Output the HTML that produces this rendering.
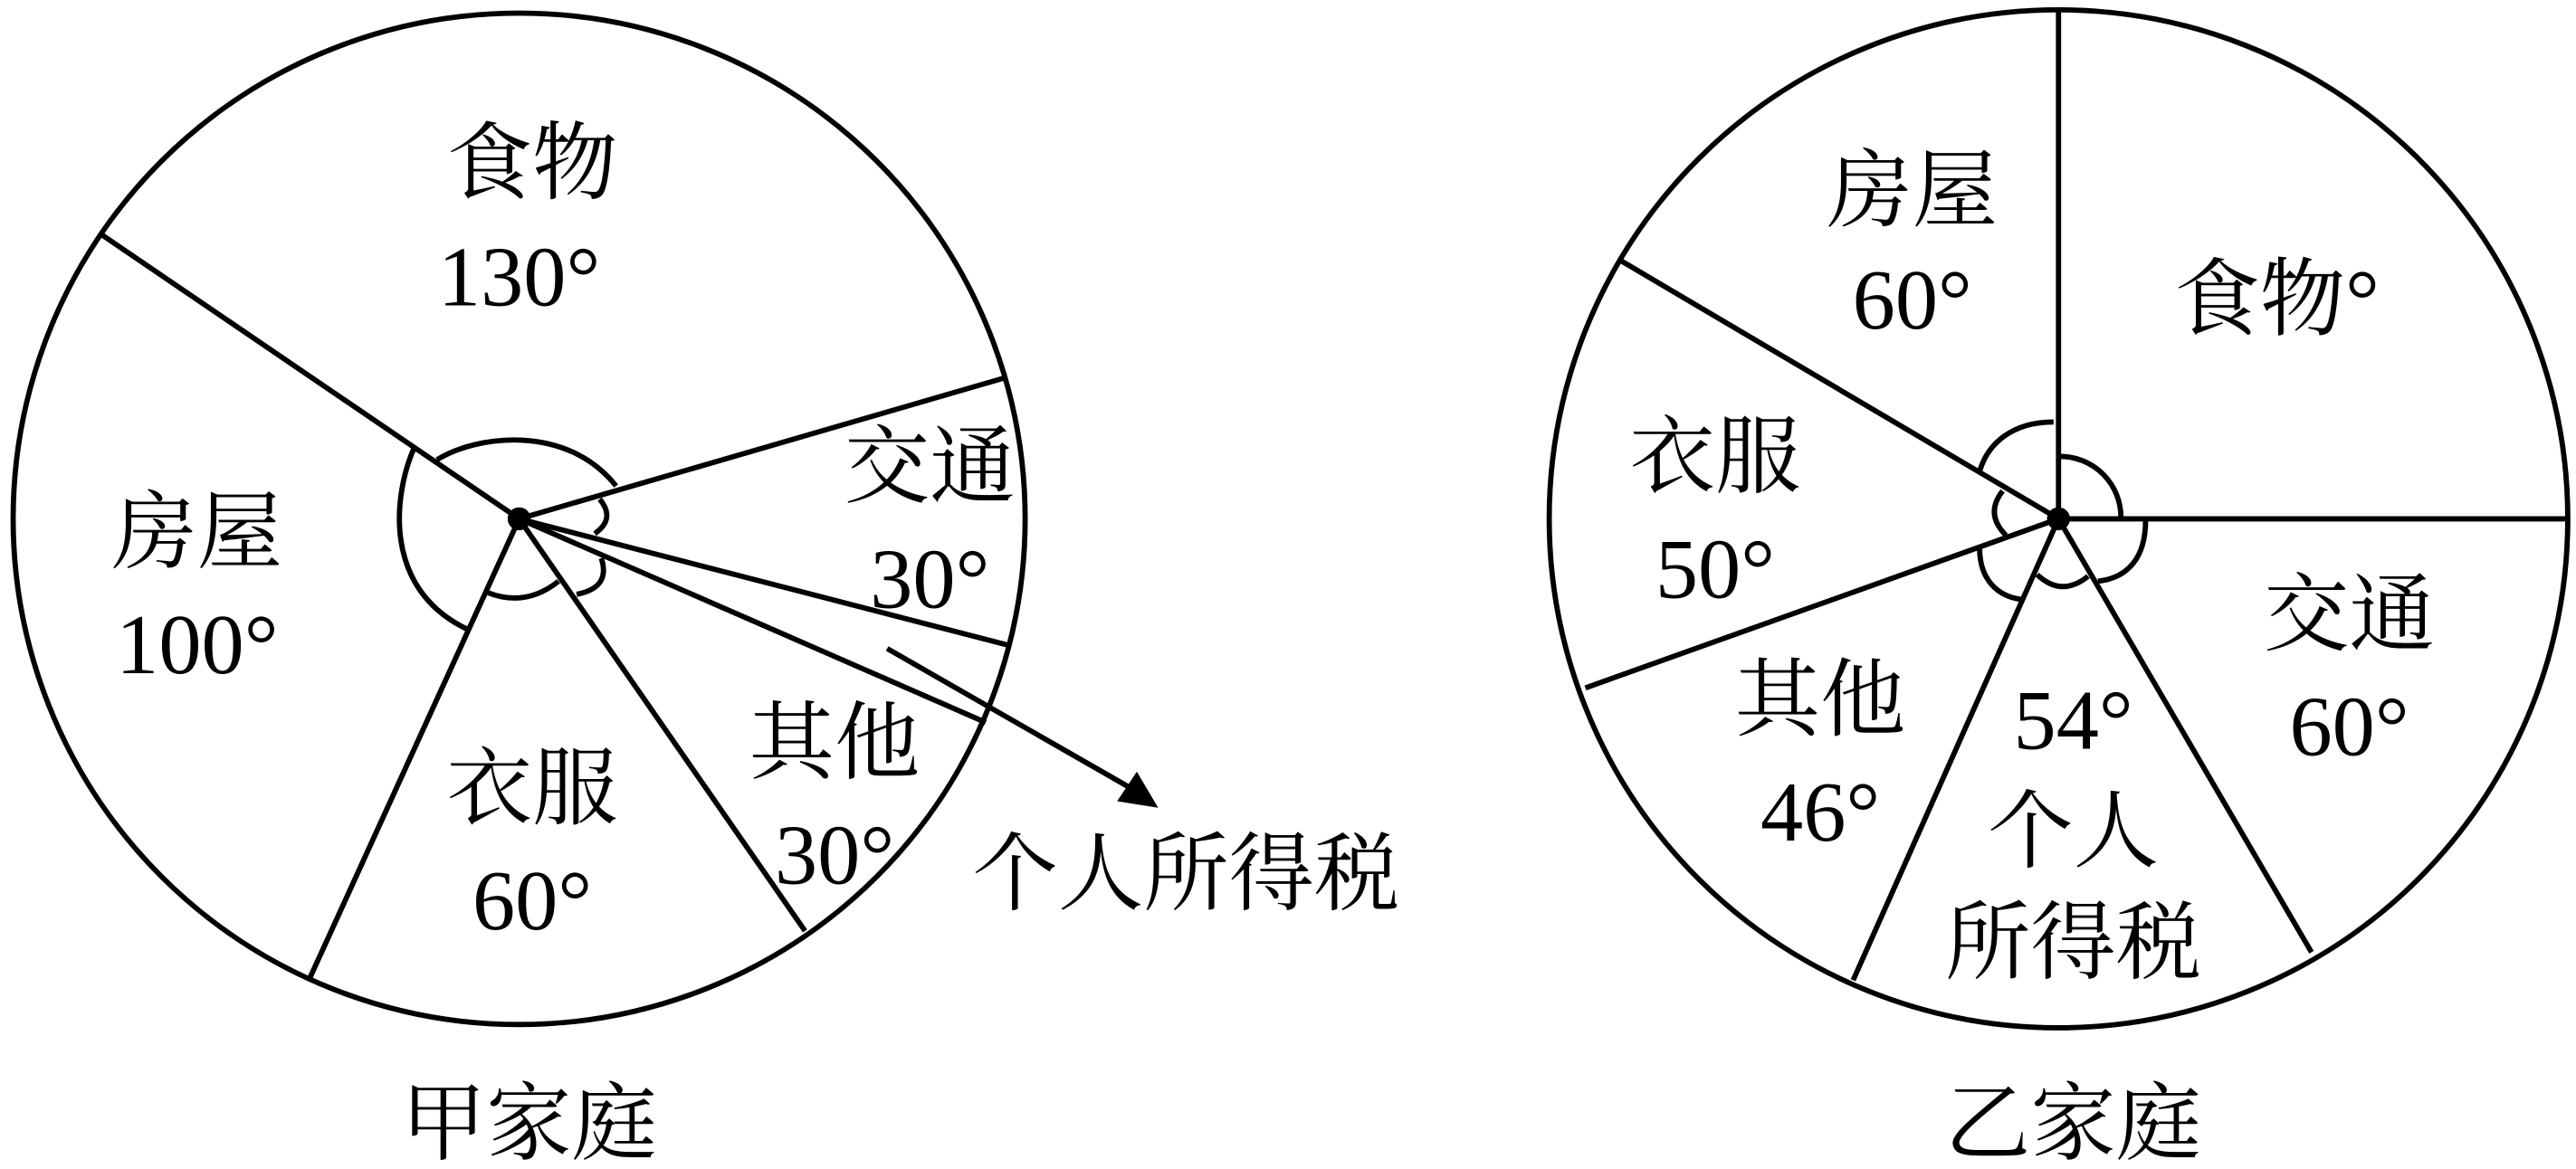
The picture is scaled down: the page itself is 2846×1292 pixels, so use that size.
<!DOCTYPE html>
<html><head><meta charset="utf-8"><style>
html,body{margin:0;padding:0;background:#fff;}
svg{display:block;}
text{font-family:"Liberation Serif","Noto Serif CJK SC",serif;font-size:52px;fill:#000;}
</style></head><body>
<svg width="2846" height="1292" viewBox="0 0 1568 712" preserveAspectRatio="none" xmlns="http://www.w3.org/2000/svg">
<g fill="none" stroke="#000" stroke-width="3.2">
<circle cx="316" cy="316" r="308"/>
<line x1="316" y1="316" x2="62" y2="143"/>
<line x1="316" y1="316" x2="612" y2="230"/>
<line x1="316" y1="316" x2="614" y2="393"/>
<line x1="316" y1="316" x2="600" y2="440"/>
<line x1="316" y1="316" x2="490" y2="567"/>
<line x1="316" y1="316" x2="188" y2="597"/>
<line x1="540" y1="395" x2="690" y2="481"/>
<path d="M266,280 C290,265 345,258 375,296"/>
<path d="M252,273 C240,300 232,358 284,383"/>
<path d="M365,304 Q375,316 362,325"/>
<path d="M297,361 Q320,370 340,354"/>
<path d="M366,340 Q372,358 351,362"/>
<circle cx="1253" cy="316" r="310"/>
<line x1="1253" y1="316" x2="1253" y2="6"/>
<line x1="1253" y1="316" x2="1562" y2="316"/>
<line x1="1253" y1="316" x2="1407" y2="580"/>
<line x1="1253" y1="316" x2="1128" y2="597"/>
<line x1="1253" y1="316" x2="965" y2="419"/>
<line x1="1253" y1="316" x2="987" y2="159"/>
<path d="M1250,257 C1225,257 1210,270 1205,287"/>
<path d="M1254,278 A37,37 0 0 1 1291,315"/>
<path d="M1306,317 C1306,340 1295,352 1277,354"/>
<path d="M1240,350 Q1255,364 1271,351"/>
<path d="M1205,334 C1205,352 1215,363 1230,365"/>
<path d="M1219,299 Q1208,313 1221,326"/>
</g>
<circle cx="316" cy="316" r="7" fill="#000"/>
<circle cx="1253" cy="316" r="7" fill="#000"/>
<polygon points="705,492 680,488 692,470" fill="#000"/>
<g text-anchor="middle">
<text x="324" y="117">食物</text>
<text x="316" y="186">130°</text>
<text x="120" y="342">房屋</text>
<text x="120" y="410">100°</text>
<text x="566" y="302">交通</text>
<text x="566" y="370">30°</text>
<text x="508" y="470">其他</text>
<text x="508" y="538">30°</text>
<text x="324" y="498">衣服</text>
<text x="324" y="566">60°</text>
<text x="722" y="550">个人所得税</text>
<text x="322" y="702">甲家庭</text>
<text x="1164" y="134">房屋</text>
<text x="1164" y="200">60°</text>
<text x="1386" y="200">食物°</text>
<text x="1044" y="296">衣服</text>
<text x="1044" y="364">50°</text>
<text x="1430" y="392">交通</text>
<text x="1430" y="460">60°</text>
<text x="1108" y="444">其他</text>
<text x="1108" y="512">46°</text>
<text x="1262" y="456">54°</text>
<text x="1262" y="524">个人</text>
<text x="1262" y="592">所得税</text>
<text x="1262" y="702">乙家庭</text>
</g>
</svg>
</body></html>
